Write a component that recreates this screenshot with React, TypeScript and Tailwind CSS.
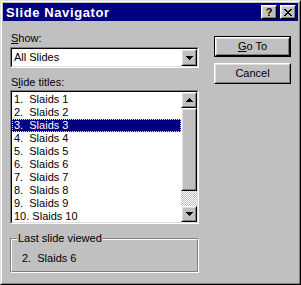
import React from "react";

const font = { fontFamily: '"Liberation Sans", Arial, sans-serif' };

function Raised({ className = "", children }: { className?: string; children?: React.ReactNode }) {
  return (
    <div className={"border border-t-white border-l-white border-r-black border-b-black " + className}>
      <div className="w-full h-full border border-t-[#dfdfdf] border-l-[#dfdfdf] border-r-[#808080] border-b-[#808080] bg-[#c0c0c0] flex items-center justify-center">
        {children}
      </div>
    </div>
  );
}

function Sunken({ className = "", children }: { className?: string; children?: React.ReactNode }) {
  return (
    <div className={"border border-t-[#808080] border-l-[#808080] border-r-white border-b-white " + className}>
      <div className="w-full h-full border border-t-black border-l-black border-r-[#dfdfdf] border-b-[#dfdfdf] bg-white flex">
        {children}
      </div>
    </div>
  );
}

function DownArrow() {
  return (
    <svg width="7" height="4" viewBox="0 0 7 4" shapeRendering="crispEdges">
      <path d="M0 0h7v1H0zM1 1h5v1H1zM2 2h3v1H2zM3 3h1v1H3z" fill="#000" />
    </svg>
  );
}
function UpArrow() {
  return (
    <svg width="7" height="4" viewBox="0 0 7 4" shapeRendering="crispEdges">
      <path d="M3 0h1v1H3zM2 1h3v1H2zM1 2h5v1H1zM0 3h7v1H0z" fill="#000" />
    </svg>
  );
}

const items = Array.from({ length: 10 }, (_, i) => i + 1);

export default function App() {
  return (
    <div style={font} className="w-[301px] h-[285px] bg-[#c0c0c0] border border-t-[#dfdfdf] border-l-[#dfdfdf] border-r-black border-b-black text-[11px] text-black leading-[13px]">
      <div className="h-full border border-t-white border-l-white border-r-[#808080] border-b-[#808080] p-px flex flex-col">
        <div className="h-[18px] bg-[#000080] flex items-center pl-[3px] pr-[2px]">
          <span className="text-white font-bold text-[13px] tracking-[0.6px] leading-none flex-1">Slide Navigator</span>
          <Raised className="w-[16px] h-[14px]">
            <span className="font-bold text-[11px] leading-none">?</span>
          </Raised>
          <Raised className="w-[16px] h-[14px] ml-[3px]">
            <svg width="8" height="7" viewBox="0 0 8 7" shapeRendering="crispEdges">
              <path d="M0 0h2v1H0zM6 0h2v1H6zM1 1h2v1H1zM5 1h2v1H5zM2 2h4v1H2zM3 3h2v1H3zM2 4h4v1H2zM1 5h2v1H1zM5 5h2v1H5zM0 6h2v1H0zM6 6h2v1H6z" fill="#000" />
            </svg>
          </Raised>
        </div>
        <div className="flex-1 flex pl-[7px] pt-[11px]">
          <div className="w-[189px] flex flex-col">
            <div className="pl-px"><span className="underline">S</span>how:</div>
            <Sunken className="mt-[2px] h-[21px]">
              <div className="flex-1 pl-[2px] flex items-center">All Slides</div>
              <Raised className="w-[16px] h-[17px]">
                <DownArrow />
              </Raised>
            </Sunken>
            <div className="mt-[8px] pl-px">S<span className="underline">l</span>ide titles:</div>
            <Sunken className="mt-px h-[134px]">
              <div className="flex-1 flex flex-col pt-px">
                {items.map((n) =>
                  n === 3 ? (
                    <div key={n} className="h-[13px] bg-[#000080] text-white border border-dotted border-[#ffff00] flex items-center pl-px whitespace-pre">
                      {`${n}.  Slaids ${n}`}
                    </div>
                  ) : (
                    <div key={n} className="h-[13px] flex items-center pl-[2px] whitespace-pre">
                      {n === 10 ? `${n}. Slaids ${n}` : `${n}.  Slaids ${n}`}
                    </div>
                  )
                )}
              </div>
              <div className="w-[16px] flex flex-col">
                <Raised className="h-[16px]">
                  <UpArrow />
                </Raised>
                <Raised className="h-[83px]" />
                <div className="flex-1 bg-[repeating-conic-gradient(#c0c0c0_0%_25%,#fff_0%_50%)] bg-[length:2px_2px]" />
                <Raised className="h-[16px]">
                  <DownArrow />
                </Raised>
              </div>
            </Sunken>
            <div className="mt-[14px] relative h-[35px] border border-t-[#808080] border-l-[#808080] border-r-white border-b-white">
              <div className="w-full h-full border border-t-white border-l-white border-r-[#808080] border-b-[#808080] pl-[10px] pt-[12px] whitespace-pre">
                {"2.  Slaids 6"}
              </div>
              <div className="absolute left-[6px] top-[-7px] bg-[#c0c0c0] px-px">Last slide viewed</div>
            </div>
          </div>
          <div className="ml-[15px] pt-[4px] flex flex-col">
            <div className="border border-black w-[77px] h-[21px]">
              <Raised className="w-full h-full">
                <span><span className="underline">G</span>o To</span>
              </Raised>
            </div>
            <Raised className="w-[77px] h-[21px] mt-[6px]">
              <span>Cancel</span>
            </Raised>
          </div>
        </div>
      </div>
    </div>
  );
}
